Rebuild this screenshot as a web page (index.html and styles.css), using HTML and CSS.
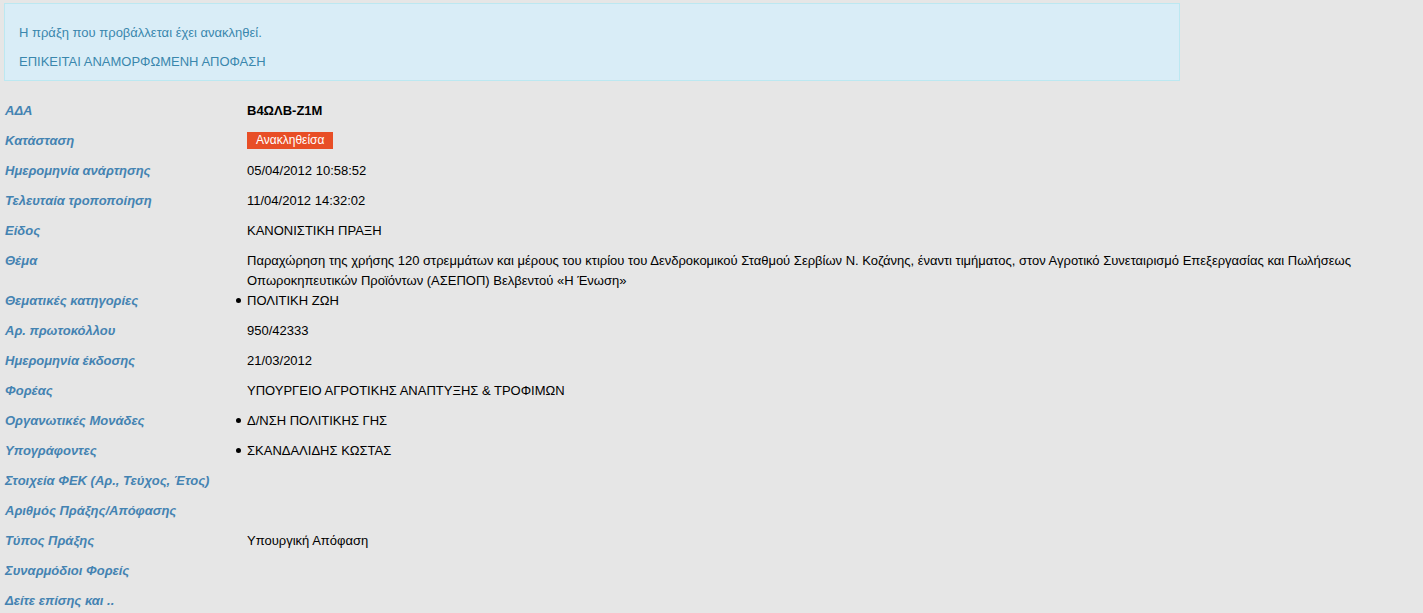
FILE: index.html
```html
<!DOCTYPE html>
<html lang="el">

<head>
    <meta charset="UTF-8">
    <title>Πράξη B4ΩΛΒ-Ζ1Μ</title>
    <link rel="stylesheet" href="styles.css">
</head>

<body>
    <div class="alert">
        <p>Η πράξη που προβάλλεται έχει ανακληθεί.</p>
        <p>ΕΠΙΚΕΙΤΑΙ ΑΝΑΜΟΡΦΩΜΕΝΗ ΑΠΟΦΑΣΗ</p>
    </div>

    <dl class="praxi">
        <dt>ΑΔΑ</dt>
        <dd class="ada">B4ΩΛΒ-Ζ1Μ</dd>

        <dt>Κατάσταση</dt>
        <dd><span class="katastasi">Ανακληθείσα</span></dd>

        <dt>Ημερομηνία ανάρτησης</dt>
        <dd>05/04/2012 10:58:52</dd>

        <dt>Τελευταία τροποποίηση</dt>
        <dd>11/04/2012 14:32:02</dd>

        <dt>Είδος</dt>
        <dd>ΚΑΝΟΝΙΣΤΙΚΗ ΠΡΑΞΗ</dd>

        <dt>Θέμα</dt>
        <dd>Παραχώρηση της χρήσης 120 στρεμμάτων και μέρους του κτιρίου του Δενδροκομικού Σταθμού Σερβίων Ν. Κοζάνης, έναντι τιμήματος, στον Αγροτικό Συνεταιρισμό Επεξεργασίας και Πωλήσεως Οπωροκηπευτικών Προϊόντων (ΑΣΕΠΟΠ) Βελβεντού «Η Ένωση»</dd>

        <dt>Θεματικές κατηγορίες</dt>
        <dd>
            <ul>
                <li>ΠΟΛΙΤΙΚΗ ΖΩΗ</li>
            </ul>
        </dd>

        <dt>Αρ. πρωτοκόλλου</dt>
        <dd>950/42333</dd>

        <dt>Ημερομηνία έκδοσης</dt>
        <dd>21/03/2012</dd>

        <dt>Φορέας</dt>
        <dd>ΥΠΟΥΡΓΕΙΟ ΑΓΡΟΤΙΚΗΣ ΑΝΑΠΤΥΞΗΣ &amp; ΤΡΟΦΙΜΩΝ</dd>

        <dt>Οργανωτικές Μονάδες</dt>
        <dd>
            <ul>
                <li>Δ/ΝΣΗ ΠΟΛΙΤΙΚΗΣ ΓΗΣ</li>
            </ul>
        </dd>

        <dt>Υπογράφοντες</dt>
        <dd>
            <ul>
                <li>ΣΚΑΝΔΑΛΙΔΗΣ ΚΩΣΤΑΣ</li>
            </ul>
        </dd>

        <dt>Στοιχεία ΦΕΚ (Αρ., Τεύχος, Έτος)</dt>
        <dd></dd>

        <dt>Αριθμός Πράξης/Απόφασης</dt>
        <dd></dd>

        <dt>Τύπος Πράξης</dt>
        <dd>Υπουργική Απόφαση</dd>

        <dt>Συναρμόδιοι Φορείς</dt>
        <dd></dd>

        <dt>Δείτε επίσης και ..</dt>
        <dd></dd>
    </dl>
</body>

</html>
```

FILE: styles.css
```css
body {
    margin: 3px 0 0 4px;
    background: #e6e6e6;
    font-family: "Liberation Sans", Arial, sans-serif;
    font-size: 13px;
    line-height: 20px;
    color: #000;
}

.alert {
    width: 1160px;
    padding: 19px 0 8px 14px;
    background: #d9edf7;
    border: 1px solid #bce8f1;
    color: #3a87ad;
}

.alert p {
    margin: 0 0 9px 0;
}

.alert p:last-child {
    margin-bottom: 0;
}

.praxi {
    display: grid;
    grid-template-columns: 242px 1fr;
    margin: 20px 0 0 1px;
    padding-right: 62px;
}

.praxi dt,
.praxi dd {
    margin: 0;
    padding: 0;
    min-height: 30px;
}

.praxi dt {
    font-weight: bold;
    font-style: italic;
    color: #4483b2;
}

.ada {
    font-weight: bold;
}

.katastasi {
    display: inline-block;
    padding: 0 9px;
    line-height: 17px;
    font-size: 12px;
    color: #fff;
    background: #e84e26;
    vertical-align: 1px;
}

.praxi ul {
    margin: 0;
    padding: 0;
    list-style: none;
}

.praxi li::before {
    content: "";
    display: inline-block;
    width: 5px;
    height: 5px;
    margin: 0 6px 0 -11px;
    border-radius: 50%;
    background: #000;
    vertical-align: 2px;
}
```
